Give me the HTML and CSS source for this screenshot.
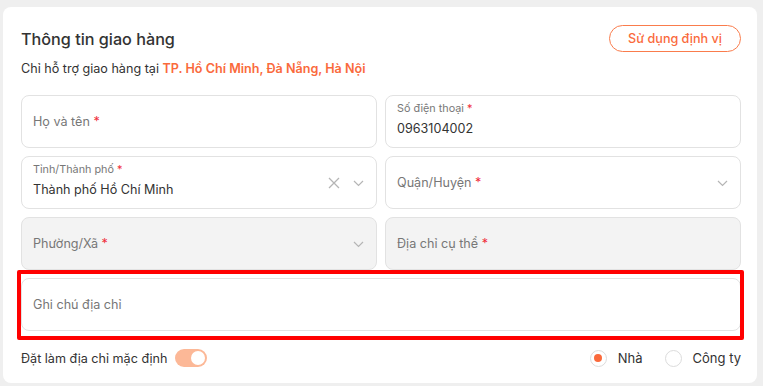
FILE: index.html
```html
<!DOCTYPE html>
<html lang="vi">
<head>
    <meta charset="UTF-8" />
    <meta name="viewport" content="width=device-width, initial-scale=1" />
    <title>Thông tin giao hàng</title>
    <link rel="stylesheet" href="styles.css">
</head>
<body>
<main class="card">
    <div class="card-head">
        <h1>Thông tin giao hàng</h1>
        <button type="button" class="btn-locate">Sử dụng định vị</button>
    </div>
    <p class="note">Chỉ hỗ trợ giao hàng tại <strong>TP. Hồ Chí Minh, Đà Nẵng, Hà Nội</strong></p>

    <div class="fields">
        <div class="field">
            <span class="placeholder">Họ và tên <em>*</em></span>
        </div>
        <div class="field filled">
            <span class="label">Số điện thoại <em>*</em></span>
            <span class="value">0963104002</span>
        </div>
        <div class="field filled">
            <span class="label">Tỉnh/Thành phố <em>*</em></span>
            <span class="value">Thành phố Hồ Chí Minh</span>
            <span class="icons">
                <svg width="12" height="12" viewBox="0 0 12 12"><path d="M1 1L11 11M11 1L1 11" stroke="#b5b5b5" stroke-width="1.3" fill="none"/></svg>
                <svg class="chev" width="11" height="7" viewBox="0 0 11 7"><path d="M1 1l4.5 4.5L10 1" stroke="#b5b5b5" stroke-width="1.2" fill="none"/></svg>
            </span>
        </div>
        <div class="field">
            <span class="placeholder">Quận/Huyện <em>*</em></span>
            <span class="icons">
                <svg class="chev" width="11" height="7" viewBox="0 0 11 7"><path d="M1 1l4.5 4.5L10 1" stroke="#b5b5b5" stroke-width="1.2" fill="none"/></svg>
            </span>
        </div>
        <div class="field disabled">
            <span class="placeholder">Phường/Xã <em>*</em></span>
            <span class="icons">
                <svg class="chev" width="11" height="7" viewBox="0 0 11 7"><path d="M1 1l4.5 4.5L10 1" stroke="#b5b5b5" stroke-width="1.2" fill="none"/></svg>
            </span>
        </div>
        <div class="field disabled">
            <span class="placeholder">Địa chỉ cụ thể <em>*</em></span>
        </div>
        <div class="field wide highlight">
            <span class="placeholder">Ghi chú địa chỉ</span>
        </div>
    </div>

    <div class="card-foot">
        <label class="default-toggle">
            Đặt làm địa chỉ mặc định
            <span class="switch"><span class="knob"></span></span>
        </label>
        <div class="types">
            <span class="radio checked"></span><span class="radio-text">Nhà</span>
            <span class="radio"></span><span class="radio-text">Công ty</span>
        </div>
    </div>
</main>
</body>
</html>
```

FILE: styles.css
```css
/* Base */
* {
    box-sizing: border-box;
}
body {
    margin: 0;
    height: 386px;
    overflow: hidden;
    background: #efefef;
    font-family: Inter, "Noto Sans", sans-serif;
    color: #333;
    padding: 7px 6px 3px 3px;
}
.card {
    background: #fff;
    border-radius: 8px;
    height: 376px;
    padding: 18px 16px 0 18px;
}
.card-head {
    display: flex;
    justify-content: space-between;
    align-items: center;
    height: 27px;
}
h1 {
    margin: 0;
    font-size: 16.2px;
    font-weight: 500;
    color: #333;
}
.btn-locate {
    height: 27px;
    width: 132px;
    border: 1px solid #fa7c4c;
    border-radius: 14px;
    background: #fff;
    color: #fa6a3c;
    font-family: inherit;
    font-size: 12.6px;
    font-weight: 500;
}
.note {
    margin: 7px 0 0;
    font-size: 12.6px;
    line-height: 20px;
    color: #333;
}
.note strong {
    color: #fa6a3c;
    font-weight: 600;
}

/* Fields */
.fields {
    margin-top: 16px;
    display: grid;
    grid-template-columns: 1fr 1fr;
    grid-auto-rows: 53px;
    gap: 8px;
}
.field {
    position: relative;
    border: 1px solid #e2e2e2;
    border-radius: 8px;
    padding: 0 11px;
    display: flex;
    flex-direction: column;
    justify-content: center;
}
.field.wide {
    grid-column: 1 / 3;
}
.field.disabled {
    background: #f3f3f3;
}
.field em {
    font-style: normal;
    color: #f02d3a;
}
.placeholder {
    font-size: 12.6px;
    color: #777;
}
.label {
    font-size: 10.8px;
    color: #777;
    line-height: 14px;
}
.value {
    font-size: 12.6px;
    color: #333;
    line-height: 18px;
    margin-top: 4px;
    margin-bottom: 3px;
}
.icons {
    position: absolute;
    right: 12px;
    top: 50%;
    transform: translateY(-50%);
    display: flex;
    align-items: center;
    gap: 13px;
}
.chev {
    margin-top: 1px;
}

/* Annotation frame */
.highlight::after {
    content: "";
    position: absolute;
    left: -5px;
    top: -9px;
    right: -4px;
    bottom: -10px;
    border: 4px solid #ff0000;
    border-radius: 2px;
}

/* Footer */
.card-foot {
    margin-top: 18px;
    display: flex;
    justify-content: space-between;
    align-items: center;
    font-size: 12.6px;
}
.default-toggle {
    display: flex;
    align-items: center;
    gap: 8px;
}
.switch {
    width: 32px;
    height: 18px;
    border-radius: 9px;
    background: #fcb897;
    display: flex;
    justify-content: flex-end;
    align-items: center;
    padding: 0 2px;
}
.knob {
    width: 14px;
    height: 14px;
    border-radius: 50%;
    background: #fff;
}
.types {
    display: flex;
    align-items: center;
}
.radio {
    width: 17px;
    height: 17px;
    border: 1px solid #dcdcdc;
    border-radius: 50%;
    display: flex;
    justify-content: center;
    align-items: center;
}
.radio.checked::after {
    content: "";
    width: 8px;
    height: 8px;
    border-radius: 50%;
    background: #fa6a3c;
}
.radio-text {
    margin-left: 11px;
    margin-right: 22px;
    font-size: 13px;
}
.radio-text:last-child {
    margin-right: 0;
}
```
